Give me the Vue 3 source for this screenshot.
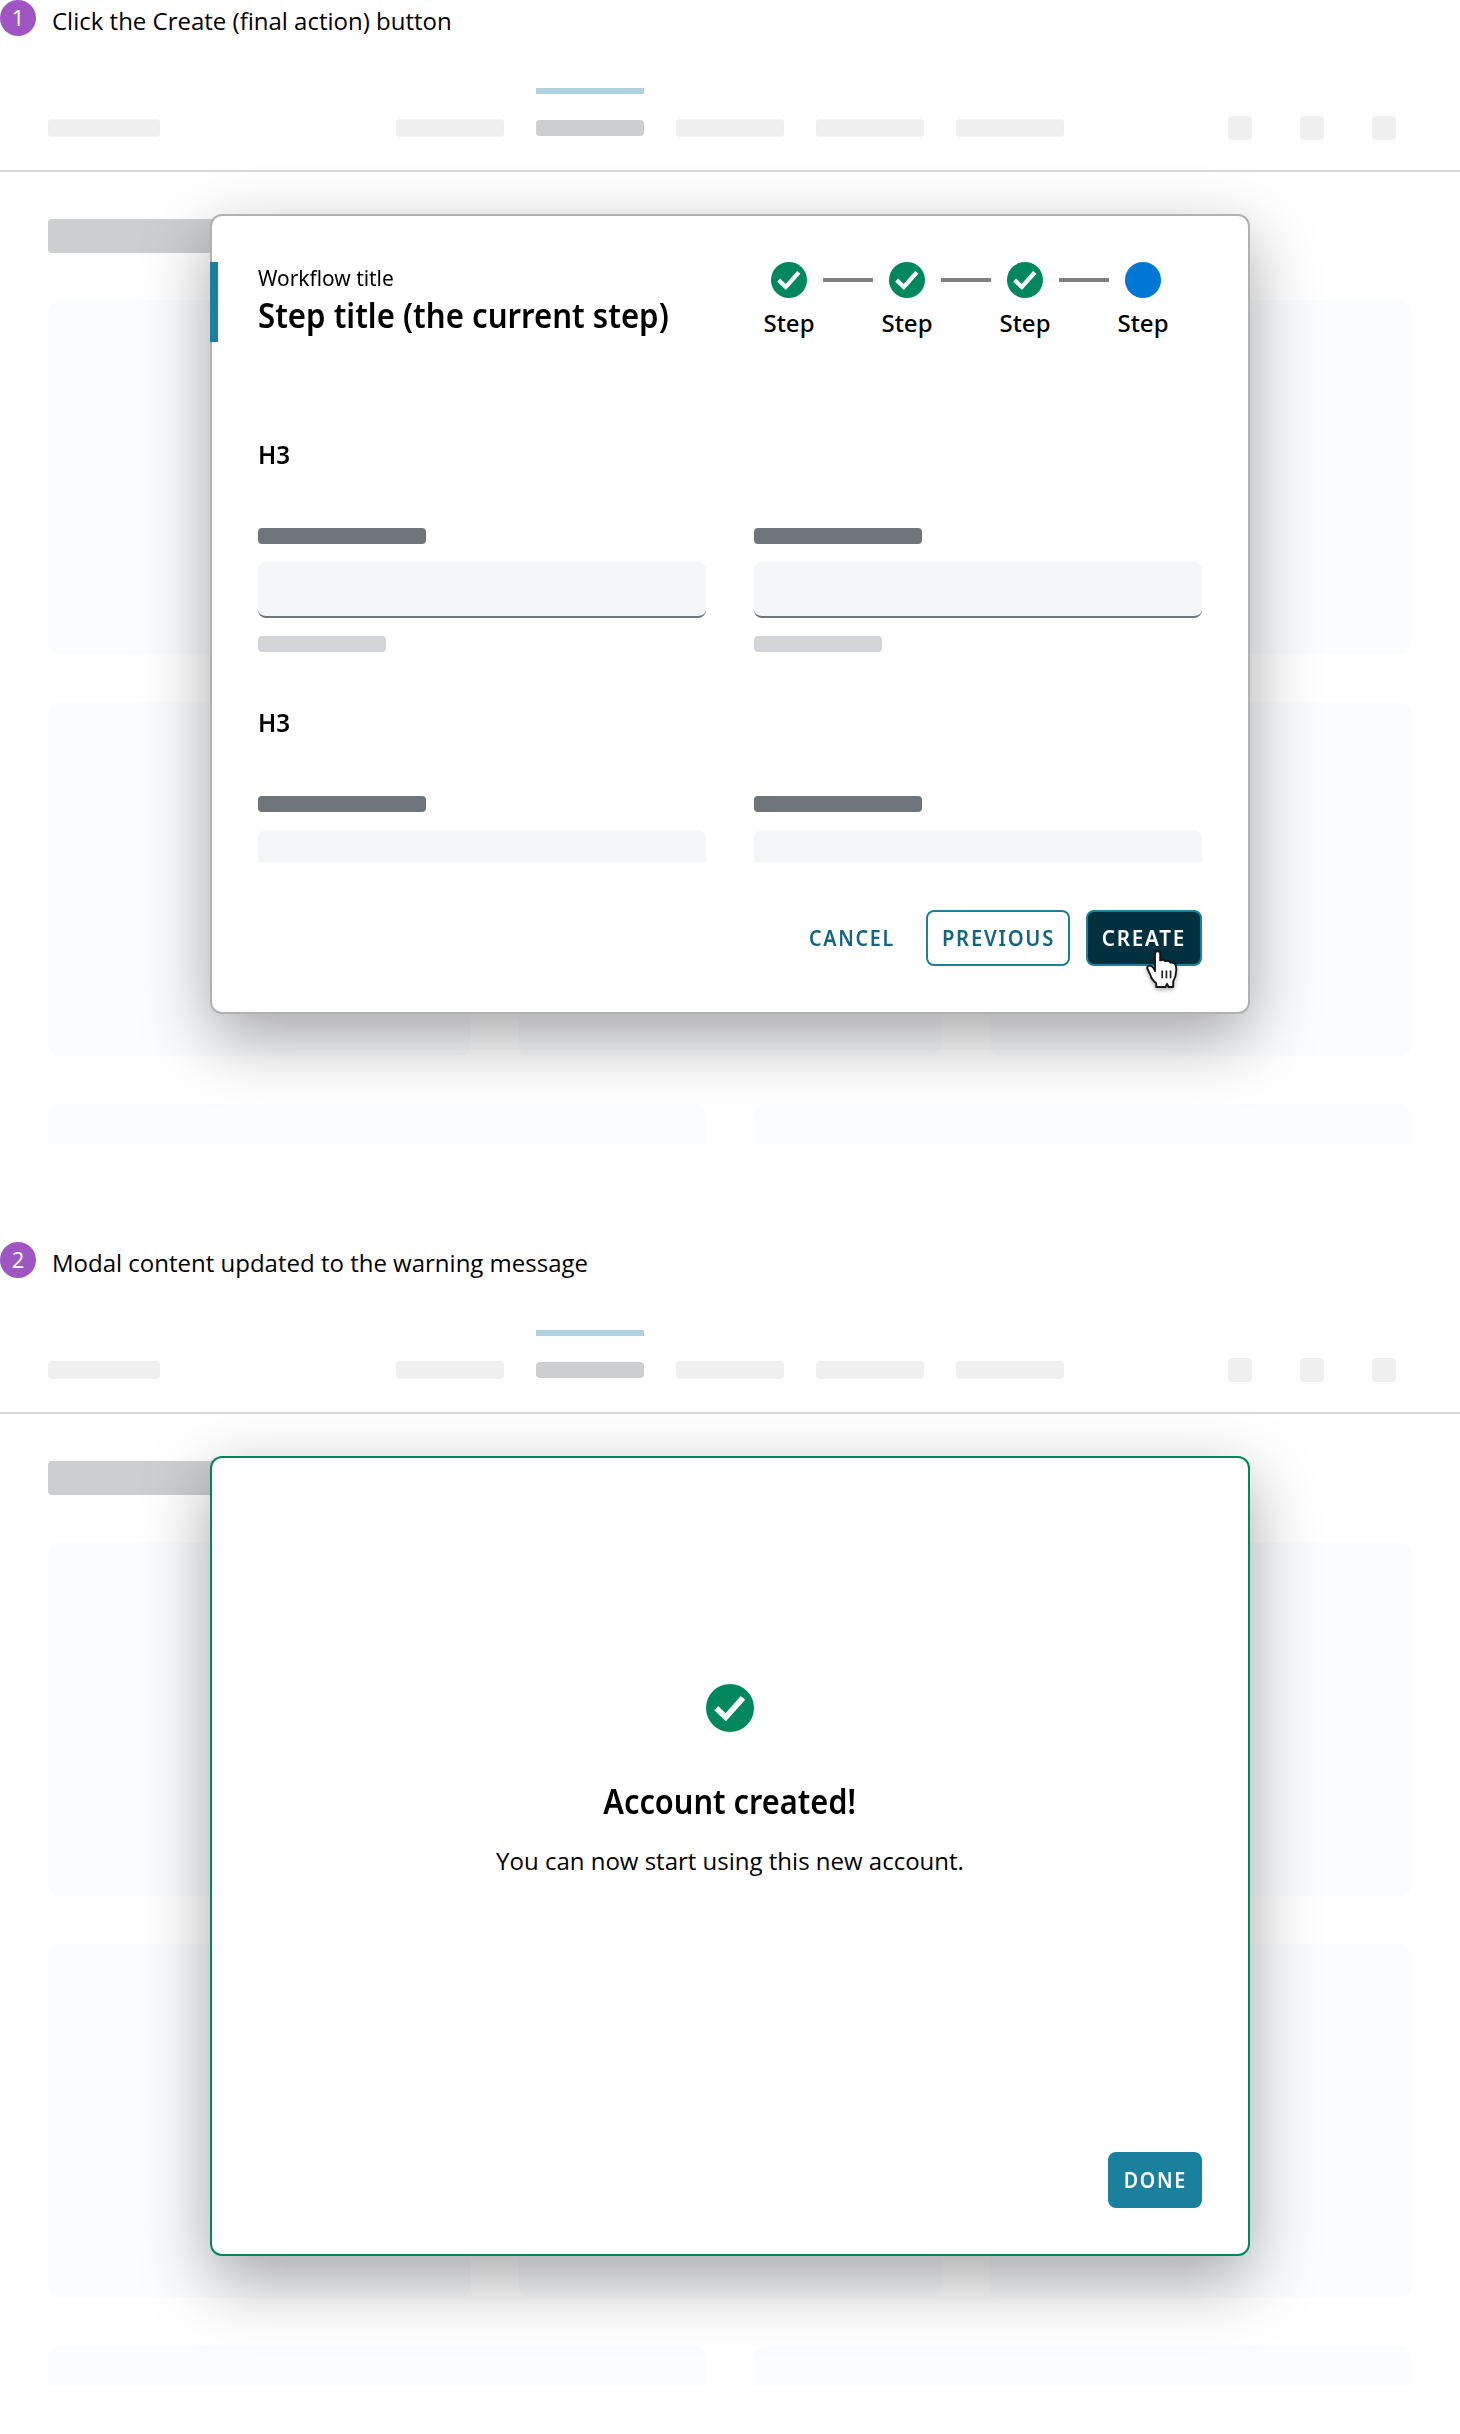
<script setup>
const steps = [
  { label: 'Step', done: true },
  { label: 'Step', done: true },
  { label: 'Step', done: true },
  { label: 'Step', done: false },
]
const scenes = [
  { number: 1, caption: 'Click the Create (final action) button', kind: 'workflow' },
  { number: 2, caption: 'Modal content updated to the warning message', kind: 'success' },
]
</script>

<template>
  <main class="page">
    <section v-for="scene in scenes" :key="scene.number" class="scene">
      <header class="caption">
        <span class="badge">{{ scene.number }}</span>
        <p class="caption-text">{{ scene.caption }}</p>
      </header>

      <nav class="nav">
        <span class="bar logo"></span>
        <div class="links">
          <span v-for="n in 5" :key="n" class="bar link" :class="{ active: n === 2 }"></span>
        </div>
        <div class="tools">
          <span v-for="n in 3" :key="n" class="bar tool"></span>
        </div>
      </nav>

      <div class="backdrop">
        <div class="heading"></div>
        <div class="cards">
          <span v-for="n in 3" :key="n" class="card"></span>
        </div>
        <div class="cards">
          <span v-for="n in 3" :key="n" class="card"></span>
        </div>
        <div class="cards cut">
          <span v-for="n in 2" :key="n" class="card"></span>
        </div>
      </div>

      <div v-if="scene.kind === 'workflow'" class="modal">
        <span class="accent"></span>
        <header class="modal-head">
          <div class="titles">
            <p class="workflow"><span class="narrow">Workflow title</span></p>
            <h2 class="title"><span class="narrow">Step title (the current step)</span></h2>
          </div>
          <ol class="steps">
            <li v-for="(step, i) in steps" :key="i" class="step">
              <div class="marker">
                <svg class="dot" viewBox="0 0 48 48">
                  <circle cx="24" cy="24" r="24" :fill="step.done ? '#00875c' : '#0077d2'" />
                  <polygon v-if="step.done" fill="#fff" points="8.3,26.3 12.2,22 19.6,29.2 34.8,12 39.2,15.8 19.9,37.2" />
                </svg>
                <span v-if="i < steps.length - 1" class="line"></span>
              </div>
              <p class="step-label">{{ step.label }}</p>
            </li>
          </ol>
        </header>

        <div class="form">
          <section v-for="n in 2" :key="n" class="group">
            <h3 class="group-title"><span class="narrow">H3</span></h3>
            <div class="fields">
              <div v-for="f in 2" :key="f" class="field">
                <span class="label"></span>
                <span class="input"></span>
                <span class="help"></span>
              </div>
            </div>
          </section>
        </div>

        <footer class="actions">
          <button class="btn cancel"><span class="narrow">CANCEL</span></button>
          <button class="btn previous"><span class="narrow">PREVIOUS</span></button>
          <button class="btn create"><span class="narrow">CREATE</span></button>
        </footer>

        <svg class="cursor" viewBox="0 0 32 38" width="32" height="38">
          <path
            d="M9 21V4.2Q9 1.2 11.6 1.2T14.2 4.2V10.4Q17.4 8.6 19.4 11.2Q22.6 10 24.6 12.6Q29.4 12.4 30 16.4Q31.2 24 27.2 31.4V37H22.6L21 33.8L19.6 37H10.2V33.2Q5.4 29.6 4.4 25L1.2 18.4Q1 15.4 4 15.6Q7.4 16.4 9 21Z"
            fill="#fff" stroke="#151515" stroke-width="1.9" stroke-linejoin="round"
          />
          <path d="M16.2 20.4V28.2M20.4 20.4V28.2M24.6 20.4V28.2" stroke="#222" stroke-width="1.7" fill="none" />
        </svg>
      </div>

      <div v-else class="modal success">
        <svg class="big-dot" viewBox="0 0 48 48">
          <circle cx="24" cy="24" r="24" fill="#00875c" />
          <polygon fill="#fff" points="8.3,26.3 12.2,22 19.6,29.2 34.8,12 39.2,15.8 19.9,37.2" />
        </svg>
        <h2 class="title message-title"><span class="narrow">Account created!</span></h2>
        <p class="message">You can now start using this new account.</p>
        <footer class="actions">
          <button class="btn finish"><span class="narrow">DONE</span></button>
        </footer>
      </div>
    </section>
  </main>
</template>

<style>
html,
body {
  margin: 0;
  background: #fff;
}
</style>

<style scoped>
* {
  box-sizing: border-box;
}
p,
h2,
h3,
ol {
  margin: 0;
  padding: 0;
  list-style: none;
}
.page {
  width: 1460px;
  height: 2434px;
  overflow: hidden;
  color: #000;
  font-family: "Open Sans", "Noto Sans", sans-serif;
}
.scene {
  position: relative;
  height: 1242px;
}
.caption {
  display: flex;
  gap: 16px;
  height: 44px;
}
.badge {
  width: 36px;
  height: 36px;
  border-radius: 50%;
  background: #9e56c2;
  color: #fff;
  font-size: 22px;
  line-height: 35px;
  text-align: center;
}
.caption-text {
  font-size: 24px;
  line-height: 41px;
  white-space: nowrap;
}

/* Page skeleton behind the dialogs */
.nav {
  display: flex;
  align-items: center;
  height: 84px;
  margin-top: 44px;
  padding: 0 0 2px 48px;
  border-bottom: 2px solid #d8d8d8;
}
.bar {
  height: 18px;
  border-radius: 4px;
  background: #f0f0f0;
}
.logo {
  width: 112px;
}
.links {
  display: flex;
  align-items: center;
  gap: 32px;
  margin-left: 236px;
}
.link {
  width: 108px;
}
.link.active {
  position: relative;
  height: 16px;
  background: #cdced0;
}
.link.active::before {
  content: "";
  position: absolute;
  top: -32px;
  left: 0;
  width: 100%;
  height: 6px;
  background: #b0d2dc;
}
.tools {
  display: flex;
  gap: 48px;
  margin-left: 164px;
}
.tool {
  width: 24px;
  height: 24px;
}
.backdrop {
  display: flex;
  flex-direction: column;
  gap: 48px;
  height: 972px;
  padding: 47px 48px 0;
  overflow: hidden;
}
.heading {
  flex: none;
  width: 240px;
  height: 34px;
  margin-bottom: -1px;
  border-radius: 4px;
  background: #cdced0;
}
.cards {
  display: flex;
  flex: none;
  gap: 48px;
}
.card {
  flex: 1;
  height: 354px;
  border-radius: 12px;
  background: #fbfcfe;
}

/* Dialog */
.modal {
  position: absolute;
  top: 214px;
  left: 210px;
  display: flex;
  flex-direction: column;
  width: 1040px;
  height: 800px;
  padding: 46px;
  border: 2px solid #b0b1b1;
  border-radius: 12px;
  background: #fff;
  box-shadow: 0 24px 68px rgba(0, 0, 0, 0.35);
}
.accent {
  position: absolute;
  top: 46px;
  left: -2px;
  width: 8px;
  height: 80px;
  background: #1b7f9e;
}
.modal-head {
  display: flex;
  justify-content: space-between;
  height: 80px;
}
.narrow {
  display: inline-block;
  font-family: "Noto Sans", "Open Sans", sans-serif;
  transform-origin: left center;
  white-space: nowrap;
}
.workflow {
  font-size: 22px;
  line-height: 31px;
}
.workflow .narrow {
  transform: scaleX(0.95);
}
.title {
  font-size: 34px;
  font-weight: 600;
  line-height: 44px;
}
.title .narrow {
  transform: scaleX(0.917);
}
.steps {
  display: flex;
}
.step {
  width: 118px;
}
.marker {
  display: flex;
  align-items: center;
  gap: 16px;
  padding-left: 41px;
}
.dot {
  flex: none;
  width: 36px;
  height: 36px;
}
.line {
  flex: none;
  width: 50px;
  height: 4px;
  background: #808080;
}
.step-label {
  font-family: "Noto Sans", "Open Sans", sans-serif;
  font-size: 24px;
  font-weight: 500;
  line-height: 49px;
  text-align: center;
}
.form {
  display: flex;
  flex-direction: column;
  gap: 53px;
  height: 520px;
  padding-top: 95px;
  overflow: hidden;
}
.group {
  flex: none;
}
.group-title {
  font-size: 26px;
  font-weight: 600;
  line-height: 34px;
}
.group-title .narrow {
  transform: scaleX(0.93);
}
.fields {
  display: flex;
  gap: 48px;
  margin-top: 57px;
}
.field {
  display: flex;
  flex: 1;
  flex-direction: column;
  gap: 18px;
}
.label {
  width: 168px;
  height: 16px;
  border-radius: 4px;
  background: #70757c;
}
.input {
  height: 56px;
  border-bottom: 2px solid #70757c;
  border-radius: 8px;
  background: #f5f6f8;
}
.help {
  width: 128px;
  height: 16px;
  border-radius: 4px;
  background: #d3d4d8;
}
.actions {
  display: flex;
  justify-content: flex-end;
  gap: 16px;
  margin-top: auto;
}
.btn {
  display: flex;
  align-items: center;
  justify-content: center;
  height: 56px;
  padding: 0 0 2px;
  border: 2px solid transparent;
  border-radius: 8px;
  background: none;
  color: #14657f;
  font-size: 22px;
  font-weight: 600;
  letter-spacing: 1.9px;
}
.btn .narrow {
  transform-origin: center;
}
.cancel {
  width: 116px;
}
.cancel .narrow,
.finish .narrow {
  transform: scaleX(0.895);
}
.previous {
  width: 144px;
  padding-left: 2px;
  border-color: #1b7f9e;
}
.previous .narrow {
  transform: scaleX(0.92);
}
.create {
  width: 116px;
  border-color: #1b7f9e;
  background: #03303f;
  color: #fff;
}
.create .narrow {
  transform: scaleX(0.94);
}
.finish {
  width: 94px;
  background: #1b7f9e;
  border-color: #1b7f9e;
  color: #fff;
}
.cursor {
  position: absolute;
  top: 734px;
  left: 934px;
  overflow: visible;
  filter: drop-shadow(0 2px 2px rgba(0, 0, 0, 0.3));
}

/* Confirmation */
.success {
  align-items: center;
  padding-top: 226px;
  border-color: #00875c;
}
.big-dot {
  flex: none;
  width: 48px;
  height: 48px;
}
.message-title {
  margin-top: 47px;
}
.message-title .narrow {
  transform: scaleX(0.905);
  transform-origin: center;
}
.message {
  margin-top: 21px;
  font-size: 24px;
  line-height: 34px;
}
.success .actions {
  align-self: stretch;
}
</style>
